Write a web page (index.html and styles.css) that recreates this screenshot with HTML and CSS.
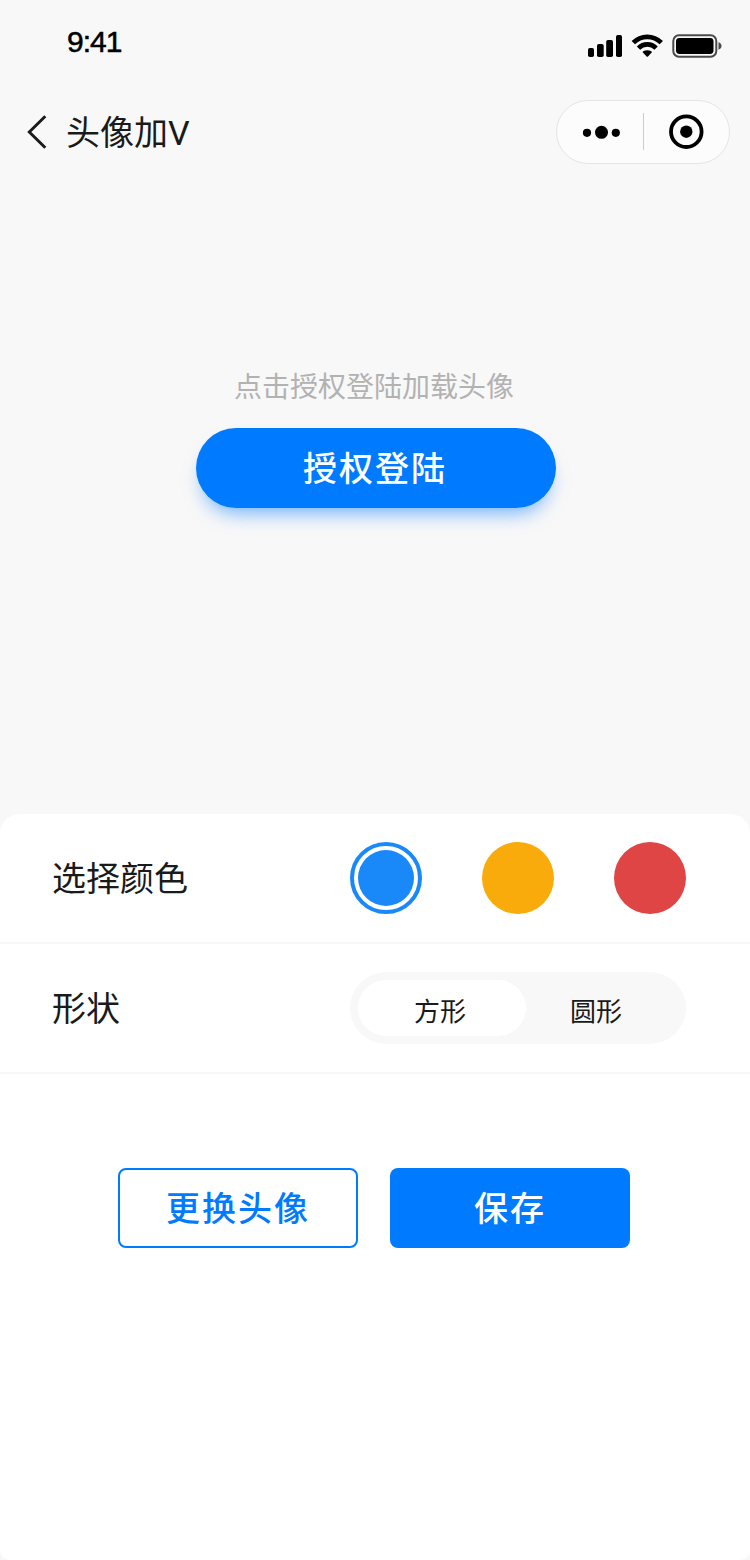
FILE: index.html
```html
<!DOCTYPE html>
<html lang="zh-CN">
<head>
<meta charset="utf-8">
<title>头像加V</title>
<link rel="stylesheet" href="styles.css">
</head>
<body>
<div class="page">
  <header class="status-bar">
    <span class="time">9:41</span>
    <svg class="status-icons" width="136" height="24" viewBox="0 0 136 24">
      <rect x="0" y="14" width="6" height="9" rx="1.8"/>
      <rect x="9" y="10" width="6.700" height="13" rx="1.8"/>
      <rect x="18.200" y="6" width="6.800" height="17" rx="1.8"/>
      <rect x="28" y="1" width="6" height="22" rx="1.8"/>
      <g fill="none" stroke="#000" stroke-width="4.700">
        <path d="M45.300 8.700C53 .8 65.400 .8 73.300 8.700"/>
        <path d="M50.500 14.100C55.400 9.200 63.200 9.200 68.100 14.100"/>
      </g>
      <path d="M54.900 17.600Q59.300 14.700 63.700 17.600Q64.200 18.100 63.700 18.600L60 22.400Q59.300 23.100 58.600 22.400L54.900 18.600Q54.400 18.100 54.900 17.600Z"/>
      <rect x="85.300" y="1.300" width="43" height="21.400" rx="5.600" fill="none" stroke="#000" stroke-opacity=".7" stroke-width="2"/>
      <rect x="88" y="4" width="37.500" height="16" rx="3.400"/>
      <path d="M130.500 8.300Q133.500 9.300 133.500 12T130.500 15.700Z" fill-opacity=".7"/>
    </svg>
  </header>
  <nav class="nav-bar">
    <svg class="back" width="24" height="36" viewBox="0 0 24 36"><path d="M19.300 2.200L3.300 18L19.300 33.800" fill="none" stroke="#1a1a1a" stroke-width="2.900"/></svg>
    <h1 class="title">头像加V</h1>
    <div class="capsule">
      <svg class="more" width="38" height="14" viewBox="0 0 38 14"><circle cx="5" cy="7.800" r="4.100"/><circle cx="19.500" cy="7.300" r="6.500"/><circle cx="33.800" cy="7.800" r="4.100"/></svg>
      <span class="divider"></span>
      <svg class="close" width="36" height="36" viewBox="0 0 36 36"><circle cx="18.300" cy="17.700" r="15.300" fill="none" stroke="#000" stroke-width="3.800"/><circle cx="18.300" cy="17.700" r="6.200"/></svg>
    </div>
  </nav>
  <main class="preview">
    <p class="hint">点击授权登陆加载头像</p>
    <button class="login">授权登陆</button>
  </main>
  <section class="sheet">
    <div class="row">
      <span class="label">选择颜色</span>
      <div class="colors">
        <span class="swatch blue selected"></span>
        <span class="swatch yellow"></span>
        <span class="swatch red"></span>
      </div>
    </div>
    <div class="row">
      <span class="label">形状</span>
      <div class="segment">
        <span class="option active">方形</span>
        <span class="option">圆形</span>
      </div>
    </div>
    <div class="actions">
      <button class="action outline">更换头像</button>
      <button class="action solid">保存</button>
    </div>
  </section>
</div>
</body>
</html>
```
FILE: styles.css
```css
* { box-sizing: border-box; }
body {
  margin: 0;
  background: #f8f8f8;
  color: #1a1a1a;
  font-family: "Noto Sans CJK SC", sans-serif;
}
button { margin: 0; padding: 0; border: 0; font-family: inherit; }
.page {
  width: 750px;
  height: 1560px;
  display: flex;
  flex-direction: column;
  overflow: hidden;
}
.status-bar {
  height: 88px;
  padding: 24px 26px 0 67px;
  display: flex;
  justify-content: space-between;
}
.time {
  font: 400 30px/36px "Liberation Sans", Arial, sans-serif;
  letter-spacing: -1px;
  color: #000;
  -webkit-text-stroke: 0.5px #000;
}
.status-icons { margin-top: 10px; }
.nav-bar {
  height: 88px;
  padding: 0 20px 0 26px;
  display: flex;
  align-items: center;
}
.title {
  margin: 0 auto 0 16px;
  padding-top: 1px;
  font: 400 34px/48px Roboto, "Noto Sans CJK SC", sans-serif;
}
.capsule {
  width: 174px;
  height: 64px;
  padding: 0 25px;
  border: 1px solid #e5e5e5;
  border-radius: 32px;
  background: #fcfcfc;
  display: flex;
  align-items: center;
  justify-content: space-between;
}
.divider { width: 1px; height: 37px; margin: 0 2px 1px 0; background: #ccc; }
.preview {
  height: 638px;
  padding-top: 189px;
  display: flex;
  flex-direction: column;
  align-items: center;
}
.hint {
  margin: 0 2px 23px 0;
  font-size: 28px;
  line-height: 40px;
  color: #b2b2b2;
}
.login {
  width: 360px;
  height: 80px;
  margin-left: 2px;
  padding: 0 2px 3px 0;
  border-radius: 40px;
  background: #007aff;
  box-shadow: 0 12px 20px -8px rgba(0, 122, 255, 0.6);
  color: #fff;
  font-size: 34px;
  font-weight: 500;
  letter-spacing: 2px;
}
.sheet {
  flex: 1;
  border-radius: 20px 20px 10px 10px;
  background: #fff;
}
.row {
  height: 130px;
  padding: 0 64px 0 52px;
  border-bottom: 2px solid #f8f8f8;
  display: flex;
  align-items: center;
  justify-content: space-between;
}
.label { padding-bottom: 2px; font-size: 34px; line-height: 48px; }
.colors { display: flex; gap: 60px; }
.swatch { width: 72px; height: 72px; border-radius: 50%; }
.blue { background: #1989fa; }
.yellow { background: #faab0c; }
.red { background: #e04545; }
.selected {
  padding: 4px;
  border: 4px solid #1989fa;
  background: #1989fa content-box;
}
.segment {
  width: 336px;
  height: 72px;
  padding: 8px;
  border-radius: 36px;
  background: #f8f8f8;
  display: flex;
}
.option {
  width: 168px;
  height: 56px;
  padding: 2px 4px 0 0;
  border-radius: 28px;
  font-size: 26px;
  line-height: 56px;
  text-align: center;
}
.option:last-child { width: 152px; padding-right: 12px; }
.active { background: #fff; }
.actions {
  padding: 94px 120px 0 118px;
  display: flex;
  gap: 32px;
}
.action {
  width: 240px;
  height: 80px;
  padding-bottom: 3px;
  border-radius: 8px;
  font-size: 34px;
  font-weight: 500;
  letter-spacing: 2px;
}
.outline { border: 2px solid #007aff; background: #fff; color: #007aff; }
.solid { background: #007aff; color: #fff; }
```
